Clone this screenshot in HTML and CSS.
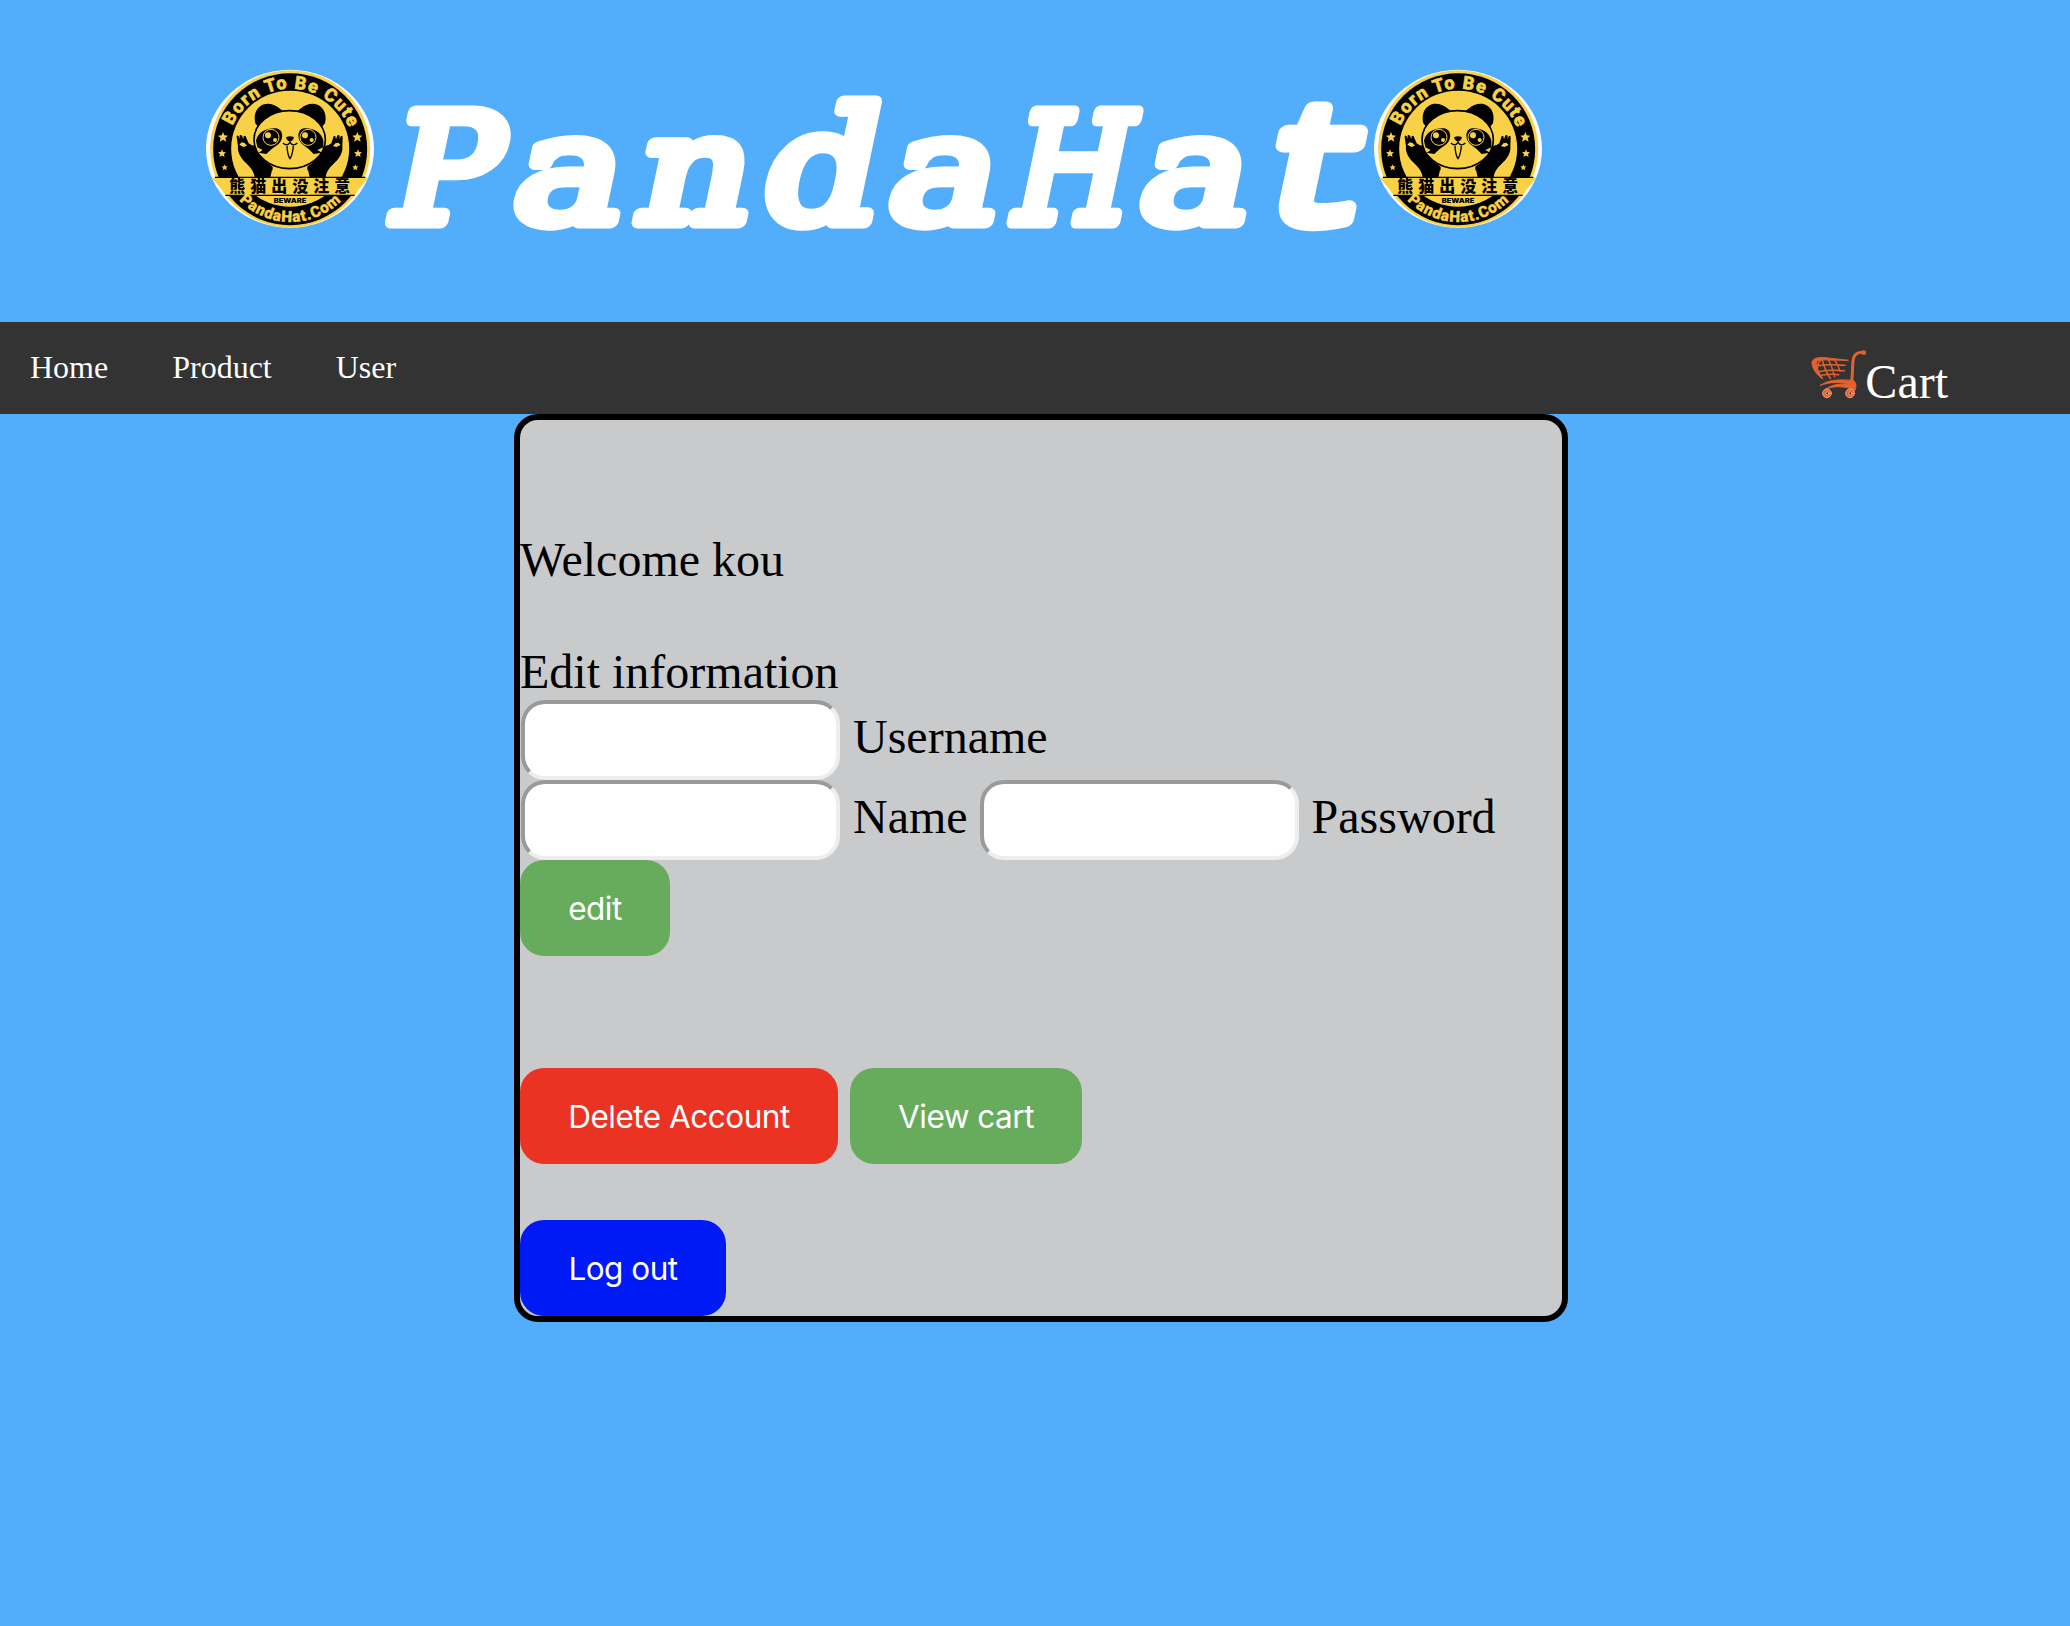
FILE: index.html
```html
<!DOCTYPE html>
<html lang="en">
<head>
<meta charset="utf-8">
<title>PandaHat</title>
<link rel="stylesheet" href="styles.css">
</head>
<body>
<svg class="defs" width="0" height="0" aria-hidden="true">
  <defs>
    <path id="arc-top" d="M96 266 A187 180 0 0 1 470 266"/>
    <path id="arc-bottom" d="M66 266 A217 220 0 0 0 500 266"/>
    <path id="star" d="M0-15 4-5 15-4 7 3 10 14 0 8-10 14-7 3-15-4-4-5Z"/>
    <symbol id="badge" viewBox="27 27 510 480">
      <ellipse cx="282" cy="266.500" rx="252" ry="237" fill="#fff"/>
      <ellipse cx="282.500" cy="266.500" rx="240" ry="236" fill="#f8d147"/>
      <ellipse cx="282.500" cy="267.500" rx="231" ry="228" fill="#000"/>
      <ellipse cx="282.500" cy="266" rx="177" ry="174" fill="#f8d147"/>
      <g fill="#f8d147">
        <use href="#star" x="81" y="231"/>
        <use href="#star" transform="translate(78 280) scale(.8)"/>
        <use href="#star" transform="translate(86 322) scale(.6)"/>
        <use href="#star" x="484" y="231"/>
        <use href="#star" transform="translate(486 280) scale(.8)"/>
        <use href="#star" transform="translate(478 322) scale(.6)"/>
      </g>
      <path d="M176 352C174 332 160 318 143 302 130 288 124 272 126 258L122 232Q121 224 127 228L133 238 130 228Q134 221 139 229L142 238 143 229Q149 224 151 234L158 250Q166 258 178 258C196 290 210 308 230 320L230 352Z"/>
      <path d="M389 352C391 332 405 318 422 302 435 288 441 272 439 258L440 234Q440 224 434 229L430 238 431 228Q427 221 423 229L420 238 418 229Q412 225 411 235L406 250Q398 258 386 258C368 290 354 308 334 320L334 352Z"/>
      <path d="M130 254l7-7 9 2 7 8-11 4zM411 258l7-8 9-2 7 7-13 6z" fill="#f8d147"/>
      <path d="M228 330Q282 345 336 330L341 352H223Z" fill="#f8d147"/>
      <path d="M178 190C166 140 212 112 252 146L264 155 190 205ZM387 190C399 140 353 112 313 146L301 155 375 205Z"/>
      <ellipse cx="281" cy="239" rx="107" ry="87" fill="#f8d147" stroke="#000" stroke-width="5"/>
      <path d="M180 242C185 215 214 203 240 205 264 208 263 238 248 252L228 266 211 282 188 278 200 270 184 262ZM382 242C377 215 349 203 324 205 302 208 303 238 318 252L337 266 353 282 379 278 364 270 382 262Z"/>
      <g fill="none" stroke="#f8d147" stroke-width="3">
        <circle cx="225" cy="232" r="24"/><circle cx="336" cy="232" r="24"/>
      </g>
      <g fill="#f8d147">
        <circle cx="216" cy="226" r="9"/><circle cx="237" cy="240" r="6"/><circle cx="327" cy="226" r="9"/><circle cx="347" cy="240" r="6"/>
      </g>
      <path d="M270 232Q282 225 294 232 292 242 282 245 272 242 270 232Z"/>
      <path d="M261 249Q273 261 282 247 291 261 304 249M273 258Q274 284 282 296 290 284 292 258" fill="none" stroke="#000" stroke-width="4"/>
      <path d="M47 353H518L473 406H92Z" fill="#f8d147"/>
      <path d="M57 352H508M88 406H476" stroke="#000" stroke-width="4"/>
      <text class="badge-cjk" x="100 163 226 289 352 415" y="397">熊猫出没注意</text>
      <text class="badge-small" x="233" y="429" textLength="98" lengthAdjust="spacingAndGlyphs">BEWARE</text>
      <text class="badge-top"><textPath href="#arc-top" startOffset="70" textLength="442">Born To Be Cute</textPath></text>
      <text class="badge-bottom"><textPath href="#arc-bottom" startOffset="172" textLength="340">PandaHat.Com</textPath></text>
    </symbol>
  </defs>
</svg>

<header class="banner">
  <svg class="logo" role="img" aria-label="Panda badge"><use href="#badge"/></svg>
  <h1 class="title">
    <svg class="wordmark" viewBox="375 69 998 190">
      <text class="wordmark-text" transform="translate(0 222) skewX(-11.8)"><tspan x="383" textLength="109" lengthAdjust="spacingAndGlyphs">P</tspan><tspan x="508" textLength="108" lengthAdjust="spacingAndGlyphs">a</tspan><tspan x="632" textLength="112" lengthAdjust="spacingAndGlyphs">n</tspan><tspan class="wordmark-d" x="756" textLength="114" lengthAdjust="spacingAndGlyphs">d</tspan><tspan x="883" textLength="108" lengthAdjust="spacingAndGlyphs">a</tspan><tspan x="1005" textLength="117" lengthAdjust="spacingAndGlyphs">H</tspan><tspan x="1134" textLength="108" lengthAdjust="spacingAndGlyphs">a</tspan><tspan class="wordmark-t" x="1251" textLength="113" lengthAdjust="spacingAndGlyphs">t</tspan></text>
    </svg>
  </h1>
  <svg class="logo" role="img" aria-label="Panda badge"><use href="#badge"/></svg>
</header>

<nav class="nav">
  <a class="nav-link">Home</a>
  <a class="nav-link">Product</a>
  <a class="nav-link">User</a>
  <a class="cart">
    <svg class="cart-icon" viewBox="60 114 165 156" fill="none" stroke="#e2622f" stroke-linecap="round">
      <path d="M222 127Q198 125 191 143C186 160 189 190 185 211" stroke-width="9"/>
      <circle cx="221" cy="128" r="7" fill="#e2622f" stroke="none"/>
      <path d="M66 158C68 143 85 142 105 143L175 151 110 150C85 148 78 152 79 163 81 178 88 190 99 207 80 195 66 175 66 158Z" fill="#e2622f" stroke-width="3"/>
      <path d="M77 168Q115 161 165 166M84 185Q120 179 163 182M95 196Q118 191 146 194M94 148Q82 158 83 174M97 150Q104 180 121 205M116 150Q126 170 134 200M135 152Q145 165 150 184" stroke-width="4.500"/>
      <path d="M91 226C120 205 160 210 190 211 202 222 198 238 192 246 184 232 165 231 145 230 128 230 117 233 106 238 130 220 160 222 178 222 150 216 120 215 91 226Z" fill="#e2622f" stroke-width="3"/>
      <g fill="#e2622f" stroke="#f0a58a" stroke-width="3"><ellipse cx="111" cy="250" rx="13" ry="13"/><ellipse cx="180" cy="250" rx="13" ry="13"/></g>
      <g fill="#5a4038" stroke="#f0a58a" stroke-width="3"><circle cx="112" cy="250" r="5"/><circle cx="181" cy="250" r="5"/></g>
    </svg><span>Cart</span>
  </a>
</nav>

<main class="card">
  <p class="line welcome">Welcome kou</p>
  <form class="form">
    <p class="line">Edit information</p>
    <div class="row"><input class="field" type="text" aria-label="Username"><span class="label">Username</span></div>
    <div class="row"><input class="field" type="text" aria-label="Name"><span class="label">Name</span><input class="field" type="password" aria-label="Password"><span class="label">Password</span></div>
    <button class="btn btn-edit" type="button">edit</button>
  </form>
  <div class="actions">
    <button class="btn btn-delete" type="button">Delete Account</button>
    <button class="btn btn-view" type="button">View cart</button>
  </div>
  <button class="btn btn-logout" type="button">Log out</button>
</main>
</body>
</html>
```
FILE: styles.css
```css
* { box-sizing: border-box; }

body {
  margin: 0;
  min-height: 1626px;
  background: #52adfa;
  font-family: "Liberation Serif", "Times New Roman", serif;
  font-size: 48px;
  line-height: 56px;
  color: #000;
}

.defs { display: block; height: 0; }

.banner {
  display: flex;
  align-items: flex-start;
  height: 322px;
  padding: 69px 0 0 205px;
}
.logo { flex: none; width: 170px; height: 160px; }
.title { flex: none; width: 998px; margin: 0; line-height: 0; }
.wordmark { display: block; width: 998px; height: 190px; overflow: visible; }
.wordmark-text {
  font: 400 151px "DejaVu Serif", serif;
  fill: #fff;
  stroke: #fff;
  stroke-width: 13px;
  stroke-linejoin: round;
}
.wordmark-d { font-size: 158px; }
.wordmark-t { font: 400 169px "Liberation Mono", monospace; stroke-width: 16px; }

.badge-cjk { font: 900 48px "Noto Sans CJK SC", sans-serif; }
.badge-small { font: 900 20px Inter, sans-serif; }
.badge-top { font: 800 54px Roboto, sans-serif; fill: #f8d147; stroke: #f8d147; stroke-width: 2px; }
.badge-bottom { font: 800 46px Roboto, sans-serif; fill: #f8d147; stroke: #f8d147; stroke-width: 1.500px; }

.nav {
  display: flex;
  gap: 64px;
  height: 92px;
  padding-left: 30px;
  background: #333;
  color: #fff;
}
.nav-link { padding-top: 27px; font-size: 32px; line-height: 37px; }
.cart {
  display: flex;
  align-items: flex-start;
  margin-left: auto;
  margin-right: 122px;
  padding-top: 26px;
}
.cart span { padding-top: 6px; }
.cart-icon { width: 55px; height: 52px; overflow: visible; }

.card {
  width: 1054px;
  height: 908px;
  margin-left: 514px;
  padding-top: 112px;
  border: 6px solid #000;
  border-radius: 24px;
  background: #c9cacc;
}
.line { margin: 0; }
.welcome { margin-bottom: 56px; }
.form { margin: 0 0 112px; }
.row { display: flex; height: 80px; padding-left: 1px; }
.field {
  width: 319px;
  height: 80px;
  margin: 0;
  border: 4px solid;
  border-color: #9a9a9a #eee #eee #9a9a9a;
  border-radius: 24px;
  background: #fff;
}
.label { padding: 9px 12px 0 13px; }

.btn {
  display: block;
  height: 96px;
  padding: 1px 0 0;
  border: 0;
  border-radius: 24px;
  color: #fff;
  font: 400 31.500px/95px Inter, sans-serif;
  letter-spacing: -0.5px;
}
.btn-edit { width: 150px; background: #67ac5d; }
.btn-delete { width: 318px; background: #eb3323; }
.btn-view { width: 232px; background: #67ac5d; }
.btn-logout { width: 206px; background: #001af5; }
.actions { display: flex; gap: 12px; margin-bottom: 56px; }
```
